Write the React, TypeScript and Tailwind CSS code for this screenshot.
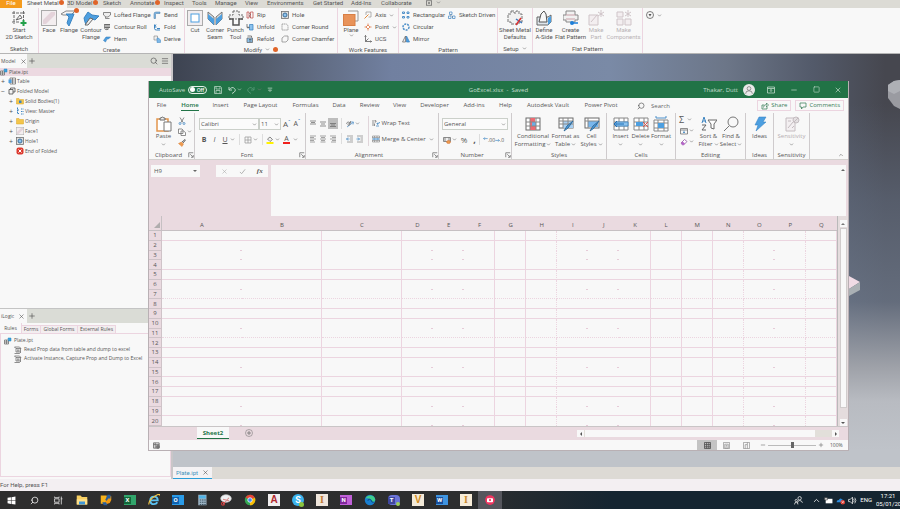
import type { ReactNode } from "react";
import clsx from "clsx";
import {
  ChevronDown,
  ChevronUp,
  Menu,
  Minus,
  Plus,
  Search,
  Square,
  X,
} from "lucide-react";

interface ArtProps {
  children: ReactNode;
  className?: string;
}

/* 16x16 drawing surface shared by all small icons */
function Art({ children, className = "size-4" }: ArtProps) {
  return (
    <svg
      viewBox="0 0 16 16"
      fill="none"
      stroke="#6b6b6b"
      strokeWidth="1"
      aria-hidden="true"
      className={clsx("shrink-0", className)}
    >
      {children}
    </svg>
  );
}

const S = "size-2";

const art = {
  sketch: (
    <>
      <path d="M3 1v13M1 3h13M12.5 1v9M1 12h8" strokeDasharray="3 1" />
      <path d="M5 10 9 5l2 3z" />
      <path d="M12.500 10v6M9.500 13h6" stroke="#22a04a" strokeWidth="2" />
    </>
  ),
  face: (
    <>
      <rect x="0.5" y="0.5" width="15" height="15" fill="#f3eef0" stroke="#aaa" />
      <path d="M2 10 10 2h4v3L5 14H2z" fill="#e4d3da" stroke="none" />
    </>
  ),
  flange: (
    <>
      <path d="M0 4 5 1h9l-4 4H2z" fill="#f5f5f5" stroke="#888" />
      <path d="M5 4h8l-2 5-3 7-2-3 2-6z" fill="#4d9fe0" stroke="#3c84c0" />
    </>
  ),
  contour: (
    <>
      <path d="M1 8 5 2l4 3 7 1-4 4-5-2-4 7-1-3z" fill="#4d9fe0" stroke="#3c84c0" />
      <path d="M2 15 7 8l3 1-5 6z" fill="#eee" />
    </>
  ),
  lofted: (
    <>
      <path d="M1 3h14v5l-5 4H6L1 8z" fill="#eee" stroke="#666" strokeWidth="1.5" />
      <path d="M5 12v3h8" strokeWidth="1.500" />
    </>
  ),
  roll: (
    <>
      <path d="M3 3h11M3 6h11M3 9h11M5 12h6" strokeWidth="2" />
      <path d="M3 2v9c0 3 8 3 8 0" stroke="#444" />
    </>
  ),
  hem: <path d="M1 11 6 4h9l-4 4H8l-3 6z" fill="#4d9fe0" stroke="#2d74b4" />,
  bend: (
    <>
      <path d="M2 15V6q0-4 4-4h8v3H7Q5 5 5 7v8z" fill="#7db8e8" stroke="#45779f" />
    </>
  ),
  fold: <path d="M3 3v8q0 3 4 3h7M7 8H3l3-5M8 11h6" stroke="#3c84c0" strokeWidth="2" />,
  derive: (
    <>
      <path d="M2 2h7v8H2z" fill="#eee" />
      <path d="M8 6h3l4 4v5H8z" fill="#7db8e8" stroke="#3c84c0" />
    </>
  ),
  cut: (
    <>
      <rect x="0.5" y="0.5" width="15" height="15" fill="#f1edef" stroke="#aaa" />
      <rect x="4" y="4" width="8" height="8" fill="#fff" stroke="#4d9fe0" />
    </>
  ),
  seam: (
    <>
      <path d="M1 2v7l6 6V7zM15 2v7l-6 6V7z" fill="#ddd" stroke="#777" />
      <path d="m1 9 6 6V9L1 4zM15 9l-6 6V9l6-5z" fill="#4d9fe0" stroke="none" />
    </>
  ),
  punch: (
    <>
      <path d="M5 1h6v4h4v4H1V5h4z" fill="#eee" strokeDasharray="2 1" />
      <path d="M1 9h4v6h6V9h4" stroke="#555" strokeWidth="1.500" />
    </>
  ),
  rip: (
    <>
      <path d="M2 2h4v12H2zM9 2h5v12H9z" stroke="#c0504d" strokeWidth="1.5" />
      <path d="M6 4l3 3-3 3 3 3" stroke="#555" />
    </>
  ),
  unfold: (
    <>
      <path d="M7 3h7v11H7z" fill="#8cc3ee" stroke="#3c84c0" strokeWidth="1.500" />
      <path d="M2 2v7h4M4 7l2 2-2 2" stroke="#555" strokeWidth="1.5" />
    </>
  ),
  refold: (
    <>
      <path d="M2 6h11v9H2z" fill="#8cc3ee" stroke="#666" strokeWidth="1.500" />
      <path d="M3 2h8v3M6 9h5M6 12h5" stroke="#555" strokeWidth="1.500" />
    </>
  ),
  hole: (
    <>
      <rect x="1" y="1" width="14" height="14" fill="#ddd" strokeWidth="1.5" />
      <circle cx="8" cy="8" r="4" fill="#8cc3ee" stroke="#3c6f9c" strokeWidth="2" />
    </>
  ),
  round: <path d="M2 2h7q5 0 5 6v6H2z" stroke="#8a8a8a" strokeWidth="1.500" strokeDasharray="3 1" />,
  chamfer: <path d="M2 14V6l5-4h7v8l-4 4z" stroke="#8a8a8a" strokeWidth="1.500" />,
  plane: (
    <>
      <path d="M5 1h10v10h-4" stroke="#999" />
      <rect x="0.5" y="4.5" width="11.5" height="11" fill="#e8935a" stroke="#d87f45" />
    </>
  ),
  axis: (
    <>
      <path d="M4 2h10v10H9M4 2v6" stroke="#999" strokeWidth="1.500" />
      <path d="m1 15 8-8" stroke="#e08a3c" strokeWidth="2" />
    </>
  ),
  point: (
    <>
      <path d="M8 1v14M1 8h14" stroke="#e0713c" strokeWidth="1.5" />
      <path d="m8 4 4 4-4 4-4-4z" fill="#fff" stroke="#e0713c" strokeWidth="1.500" />
    </>
  ),
  ucs: <path d="M3 1v12h12M3 13 9 7M1 3l2-2 2 2M13 11l2 2-2 2" stroke="#555" strokeWidth="1.500" />,
  rect: (
    <g stroke="#4d8fc8" strokeWidth="2">
      <path d="M1 2h4v3H1zM10 2h4v3h-4zM1 11h4v3H1zM10 11h4v3h-4z" />
    </g>
  ),
  circular: <circle cx="8" cy="8" r="6" stroke="#4d8fc8" strokeWidth="3" strokeDasharray="4 2" />,
  mirror: (
    <>
      <path d="M7 2v12H1z" fill="#eee" strokeWidth="1.500" />
      <path d="M9 2v12h6z" fill="#4d9fe0" stroke="#3c84c0" strokeWidth="1.5" />
    </>
  ),
  driven: (
    <>
      <path d="M1 10h5v5H1zM9 10h5v5H9zM3 2h5v5H3z" stroke="#4d8fc8" strokeWidth="1.500" />
      <path d="M8 12h2M6 7v3" stroke="#555" />
    </>
  ),
  defaults: (
    <>
      <path d="M4 1h3v2h2V1h3v3h3v8h-3v2H4v-2H1V4h3z" fill="#f1f1f1" stroke="#777" strokeDasharray="3 1" />
      <path d="m9 9 6 4" stroke="#3a76b8" strokeWidth="1.5" />
      <path d="m14 8-5 7" stroke="#d33" strokeWidth="1.5" />
    </>
  ),
  aside: (
    <>
      <path d="M1 7h11l3-2v7l-3 3H1z" fill="#dfe6ec" stroke="#666" />
      <path d="M12 8v7l3-3V6z" fill="#4d9fe0" stroke="none" />
      <path d="m3 12 2-8 3-3 2 3 1 8z" fill="#f8f8f8" stroke="#555" />
    </>
  ),
  flat: (
    <>
      <path d="M3 1h9v4h3v5h-3v2H3v-2H0V5h3z" fill="#f1f1f1" stroke="#888" />
      <path d="M3 5h9M3 9h9" stroke="#c9a0a8" />
      <circle cx="9" cy="13" r="2" fill="#1d7fd8" stroke="none" />
      <path d="M10 13h5" stroke="#1d7fd8" strokeWidth="1.5" />
    </>
  ),
  makePart: (
    <g stroke="#cfc4c8">
      <path d="M1 5h9v10H1zM3 12l6-7" fill="#f3eef0" />
      <path d="M13 0v7M10 2l6 4M16 2l-6 4" />
    </g>
  ),
  makeComps: (
    <g stroke="#cfc4c8">
      <path d="M1 2h6v5H1zM1 9h6v6H1zM9 9h6v6H9z" fill="#f3eef0" />
      <path d="M12 0v7M9 2l6 4M15 2l-6 4" />
    </g>
  ),
  part: (
    <>
      <path d="M1 6h8v8H1zM5 6v8M1 10h8" fill="#eee" strokeWidth="1.5" />
      <path d="M8 2h6v6H9z" fill="#38a3e0" stroke="#2684bd" />
    </>
  ),
  table: (
    <>
      <path d="M4 2h11v12H4zM4 6h11M4 10h11M9 2v12" fill="#fff" strokeWidth="1.5" />
      <path d="M1 5h6v7H1z" fill="#4d9fe0" stroke="none" />
    </>
  ),
  folded: (
    <>
      <path d="M2 5h8v9H2zM5 5V2h9v8h-4" fill="#f3f3f3" stroke="#444" strokeWidth="1.500" />
    </>
  ),
  folder: <path d="M1 3h5l1 2h8v9H1z" fill="#f3c54b" stroke="#d9a425" />,
  solids: (
    <>
      <path d="M1 3h5l1 2h8v9H1z" fill="#f3c54b" stroke="#d9a425" />
      <rect x="6" y="7" width="5" height="5" fill="#3c84c0" stroke="none" />
    </>
  ),
  views: <path d="M3 1v12h4M3 6h4M10 4h5M10 9h5M10 14h5" stroke="#3c84c0" strokeWidth="2" strokeDasharray="3 1" />,
  end: (
    <>
      <rect x="1" y="1" width="14" height="14" rx="4" fill="#dd3b30" stroke="none" />
      <path d="m5 5 6 6M11 5l-6 6" stroke="#fff" strokeWidth="2" />
    </>
  ),
  rule: <path d="M1 2h10l3 3H4zM4 5v7h9V5M1 15h10l3-3M6 8h5M6 10h5" strokeWidth="1.500" />,
  paste: (
    <>
      <rect x="1" y="3" width="11" height="12" fill="#fff" stroke="#e2954c" strokeWidth="1.500" />
      <path d="M4 4V2h1q1-2 3 0h1v2z" fill="#eee" />
      <path d="M8 6h7v9H8z" fill="#fff" stroke="#777" />
    </>
  ),
  scissors: (
    <>
      <path d="m4 1 6 10M12 1 6 11" stroke="#666" strokeWidth="1.500" />
      <circle cx="4" cy="13" r="2" stroke="#3c84c0" strokeWidth="1.5" />
      <circle cx="12" cy="13" r="2" stroke="#3c84c0" strokeWidth="1.5" />
    </>
  ),
  copy: <path d="M1 2h7l2 2v7H1zM6 6h5l4 3v6H6z" fill="#fff" strokeWidth="1.500" />,
  brush: (
    <>
      <path d="m1 9 6-3 4 4-3 5z" fill="#ee9b4f" stroke="#d87f35" />
      <path d="m8 6 6-5 1 1-5 6" stroke="#666" strokeWidth="2" />
    </>
  ),
  borders: <path d="M2 2h12v12H2zM8 2v12M2 8h12" stroke="#999" strokeWidth="1.5" />,
  bucket: (
    <>
      <path d="m3 6 5-4 5 5-5 4z" fill="#eee" stroke="#666" strokeWidth="1.500" />
      <path d="M1 14h14" stroke="#fff200" strokeWidth="4" />
    </>
  ),
  alignTop: <path d="M2 2h12M4 5h8M2 8h12" strokeWidth="1.5" />,
  alignMid: <path d="M2 4h12M4 8h8M2 12h12" strokeWidth="1.500" />,
  alignBottom: <path d="M2 7h12M4 10h8M2 13h12" strokeWidth="1.500" />,
  alignLeft: <path d="M2 2h12M2 5h8M2 8h12M2 11h8M2 14h10" stroke="#888" strokeWidth="1.500" />,
  alignCenter: <path d="M2 2h12M4 5h8M2 8h12M4 11h8M3 14h10" stroke="#888" strokeWidth="1.500" />,
  alignRight: <path d="M2 2h12M6 5h8M2 8h12M6 11h8M4 14h10" stroke="#888" strokeWidth="1.5" />,
  orient: (
    <>
      <path d="m2 14 12-9M10 4l5 0-1 5" stroke="#4d8fc8" strokeWidth="1.5" />
      <path d="M1 8q1-5 5-4t1 6q-4 2-3-1t5-3V2" strokeWidth="1.500" />
    </>
  ),
  indent: (
    <>
      <path d="M2 2h12M8 6h6M8 10h6M2 14h12" stroke="#888" strokeWidth="1.5" />
      <path d="M7 8H1M4 5 1 8l3 3" stroke="#3c84c0" strokeWidth="1.500" />
    </>
  ),
  outdent: (
    <>
      <path d="M2 2h12M9 6h5M9 10h5M2 14h12" stroke="#888" strokeWidth="1.5" />
      <path d="M1 8h6M4 5l3 3-3 3" stroke="#3c84c0" strokeWidth="1.500" />
    </>
  ),
  wrap: (
    <>
      <path d="M2 2v12M5 3q4-1 3 3H5M5 9v5" strokeWidth="1.500" />
      <path d="M10 9h3q2 0 2-3M12 7l-2 2 2 3M8 14h6" stroke="#3c84c0" strokeWidth="1.500" />
    </>
  ),
  merge: (
    <>
      <path d="M1 2h14v12H1zM1 5h14M1 11h14M5 2v3M10 2v3M5 11v3M10 11v3" strokeWidth="1" />
      <path d="M1 6h14v4H1z" fill="#bfdcf4" stroke="none" />
      <path d="M3 8h10M5 6 3 8l2 2M11 6l2 2-2 2" stroke="#2d74b4" />
    </>
  ),
  currency: (
    <>
      <path d="M1 3h14v8H1zM4 3v8M12 3v8" fill="#eee" strokeWidth="1.500" />
      <ellipse cx="11" cy="12" rx="4" ry="3" fill="#ee9b4f" stroke="#cf6d30" />
    </>
  ),
  conditional: (
    <>
      <rect x="1" y="2" width="14" height="12" fill="#fff" />
      <path d="M5 2h5v4H5zM5 6h2v4H5z M5 10h6v4H5z" fill="#ee6a72" stroke="none" />
      <path d="M7 6h4v4H7z" fill="#6aaee8" stroke="none" />
      <path d="M1 6h14M1 10h14M5 2v12M11 2v12" stroke="#888" />
    </>
  ),
  formatTable: (
    <>
      <rect x="1" y="2" width="14" height="10" fill="#fff" />
      <path d="M5 5h10v7H5z" fill="#a9d0f2" stroke="none" />
      <path d="M1 5h14M1 8h14M5 2v10M10 2v10" stroke="#888" />
      <path d="m6 15 3-5 6-5-5 7z" fill="#4d9fe0" stroke="#356d9c" />
    </>
  ),
  cellStyles: (
    <>
      <rect x="1" y="2" width="14" height="10" fill="#fff" />
      <path d="M4 5h10v6H4z" fill="#78b6ec" stroke="none" />
      <path d="M1 5h14M4 2v10" stroke="#888" />
      <path d="m6 15 3-5 6-5-5 7z" fill="#4d9fe0" stroke="#356d9c" />
    </>
  ),
  insert: (
    <>
      <path d="M1 2h14v12H1zM1 6h14M1 10h14M6 2v12M11 2v12" fill="#fff" stroke="#888" />
      <path d="M3 6h12v4H3z" fill="#8cc3ee" stroke="#4d8fc8" />
      <path d="M11 8H1M4 5 1 8l3 3" stroke="#1d6fb8" />
    </>
  ),
  remove: (
    <>
      <path d="M1 2h14v12H1zM1 6h14M1 10h14M6 2v12M11 2v12" fill="#fff" stroke="#888" />
      <path d="M3 6h7v4H3z" fill="#4d9fe0" stroke="none" />
      <path d="m10 6 5 5M15 6l-5 5" stroke="#e0524c" />
    </>
  ),
  format: (
    <>
      <path d="M3 0v2h10V0" stroke="#4d8fc8" />
      <path d="M1 4h14v11H1zM1 7h14M1 12h14M5 4v11M11 4v11" fill="#fff" stroke="#888" />
      <path d="M5 7h6v5H5z" fill="#4d9fe0" stroke="none" />
    </>
  ),
  fill: (
    <>
      <path d="M1 3h14v11H1zM1 6h14" strokeWidth="1.500" />
      <path d="M8 7v5M6 10l2 2 2-2" stroke="#3c84c0" strokeWidth="1.5" />
    </>
  ),
  eraser: (
    <>
      <path d="m2 10 7-7 5 4-7 7H5z" fill="#fff" stroke="#8a4a9c" strokeWidth="1.500" />
      <path d="m2 10 3-3 5 4-3 3H5z" fill="#b565c8" stroke="none" />
    </>
  ),
  sort: (
    <>
      <path d="m1 7 2-6 2 6M2 5h3" stroke="#3c84c0" />
      <path d="M1 9h4l-4 5h4" stroke="#666" />
      <path d="M7 4h9l-3 4v5l-3-1V8z" fill="#fff" />
    </>
  ),
  find: (
    <>
      <circle cx="10" cy="6" r="5" stroke="#777" />
      <path d="m6 10-5 5" stroke="#777" />
    </>
  ),
  ideas: <path d="M7 1h7l-3 5h3L4 15l2-6H3z" fill="#4d9fe0" stroke="#2f7cc0" strokeWidth="0.500" />,
  sensitivity: (
    <g stroke="#c4bcc0">
      <path d="M2 2h9v13H2z" fill="#f3eff1" />
      <path d="m4 12 5-6M4 5h3M8 12l2-2" />
      <circle cx="12" cy="4" r="3" fill="#e4e0e2" />
      <path d="m10 6 4-4" />
    </g>
  ),
};

type ArtName = keyof typeof art;

function Caret({ className }: { className?: string }) {
  return <ChevronDown className={clsx("size-[5px] shrink-0 text-[#777]", className)} strokeWidth={3} aria-hidden="true" />;
}

/* ---------- Modelling application ---------- */

const CAD_TABS: { label: string; width: string; dot?: boolean }[] = [
  { label: "3D Model", width: "w-[36px]", dot: true },
  { label: "Sketch", width: "w-[27px]" },
  { label: "Annotate", width: "w-[34px]", dot: true },
  { label: "Inspect", width: "w-[28px]" },
  { label: "Tools", width: "w-[23px]" },
  { label: "Manage", width: "w-[30px]" },
  { label: "View", width: "w-[22px]" },
  { label: "Environments", width: "w-[46px]" },
  { label: "Get Started", width: "w-[38px]" },
  { label: "Add-Ins", width: "w-[30px]" },
  { label: "Collaborate", width: "w-[45px]" },
];

function OrangeDot() {
  return <span className="block size-[5px] shrink-0 rounded-full bg-[#e0652a]" />;
}

interface BigProps {
  icon: ArtName;
  lines: string[];
  width: string;
  muted?: boolean;
  dot?: boolean;
  caret?: boolean;
}

function CadBig({ icon, lines, width, muted, dot, caret }: BigProps) {
  return (
    <button
      className={clsx(
        "relative flex shrink-0 flex-col items-center pt-[2px] leading-[7px] whitespace-nowrap",
        width,
        muted && "text-[#b9b3b6]",
      )}
    >
      <Art>{art[icon]}</Art>
      {dot && (
        <span className="absolute top-0 right-0">
          <OrangeDot />
        </span>
      )}
      {lines.map((line) => (
        <span key={line}>{line}</span>
      ))}
      {caret && <Caret />}
    </button>
  );
}

interface SmallItem {
  icon: ArtName;
  label: string;
  caret?: boolean;
}

function CadColumn({ items, width }: { items: SmallItem[]; width: string }) {
  return (
    <div className={clsx("flex shrink-0 flex-col pt-px", width)}>
      {items.map((item) => (
        <button key={item.label} className="flex h-3 items-center gap-[3px] whitespace-nowrap">
          <Art className={S}>{art[item.icon]}</Art>
          <span>{item.label}</span>
          {item.caret && <Caret />}
        </button>
      ))}
    </div>
  );
}

function CadGroup({ title, width, children }: { title: ReactNode; width: string; children: ReactNode }) {
  return (
    <section className={clsx("flex shrink-0 flex-col border-r border-[#ecd5e0]", width)}>
      <div className="flex flex-1">{children}</div>
      <div className="flex h-[9px] items-center justify-center gap-[3px] leading-[7px]">{title}</div>
    </section>
  );
}

function CadRibbon() {
  return (
    <div className="flex h-[46px] shrink-0 overflow-hidden border-b border-[#b5b5b5] bg-[#f8f8f8]">
      <CadGroup title="Sketch" width="w-[39px]">
        <CadBig icon="sketch" lines={["Start", "2D Sketch"]} width="w-[38px]" />
      </CadGroup>
      <CadGroup title="Create" width="w-[146px]">
        <CadBig icon="face" lines={["Face"]} width="w-[20px]" />
        <CadBig icon="flange" lines={["Flange"]} width="w-[20px]" dot />
        <CadBig icon="contour" lines={["Contour", "Flange"]} width="w-[24px]" />
        <CadColumn
          width="w-[50px]"
          items={[
            { icon: "lofted", label: "Lofted Flange" },
            { icon: "roll", label: "Contour Roll" },
            { icon: "hem", label: "Hem" },
          ]}
        />
        <CadColumn
          width="w-[28px]"
          items={[
            { icon: "bend", label: "Bend" },
            { icon: "fold", label: "Fold" },
            { icon: "derive", label: "Derive" },
          ]}
        />
      </CadGroup>
      <CadGroup
        width="w-[153px]"
        title={
          <>
            Modify <Caret /> <OrangeDot />
          </>
        }
      >
        <CadBig icon="cut" lines={["Cut"]} width="w-[20px]" />
        <CadBig icon="seam" lines={["Corner", "Seam"]} width="w-[20px]" />
        <CadBig icon="punch" lines={["Punch", "Tool"]} width="w-[21px]" />
        <CadColumn
          width="w-[35px]"
          items={[
            { icon: "rip", label: "Rip" },
            { icon: "unfold", label: "Unfold" },
            { icon: "refold", label: "Refold" },
          ]}
        />
        <CadColumn
          width="w-[54px]"
          items={[
            { icon: "hole", label: "Hole" },
            { icon: "round", label: "Corner Round" },
            { icon: "chamfer", label: "Corner Chamfer" },
          ]}
        />
      </CadGroup>
      <CadGroup title="Work Features" width="w-[61px]">
        <CadBig icon="plane" lines={["Plane"]} width="w-[26px]" caret />
        <CadColumn
          width="w-[34px]"
          items={[
            { icon: "axis", label: "Axis", caret: true },
            { icon: "point", label: "Point", caret: true },
            { icon: "ucs", label: "UCS" },
          ]}
        />
      </CadGroup>
      <CadGroup title="Pattern" width="w-[99px]">
        <div className="flex pl-[3px]">
          <CadColumn
            width="w-[46px]"
            items={[
              { icon: "rect", label: "Rectangular" },
              { icon: "circular", label: "Circular" },
              { icon: "mirror", label: "Mirror" },
            ]}
          />
          <CadColumn width="w-[48px]" items={[{ icon: "driven", label: "Sketch Driven" }]} />
        </div>
      </CadGroup>
      <CadGroup
        width="w-[35px]"
        title={
          <>
            Setup <Caret />
          </>
        }
      >
        <CadBig icon="defaults" lines={["Sheet Metal", "Defaults"]} width="w-[34px]" />
      </CadGroup>
      <CadGroup title="Flat Pattern" width="w-[110px]">
        <CadBig icon="aside" lines={["Define", "A-Side"]} width="w-[22px]" />
        <CadBig icon="flat" lines={["Create", "Flat Pattern"]} width="w-[31px]" />
        <CadBig icon="makePart" lines={["Make", "Part"]} width="w-[20px]" muted />
        <CadBig icon="makeComps" lines={["Make", "Components"]} width="w-[35px]" muted />
      </CadGroup>
      <button aria-label="More panels" className="flex h-[14px] items-center gap-[3px] pl-[3px]">
        <Art className={S}>
          <circle cx="8" cy="8" r="7" stroke="#555" strokeWidth="1.500" />
          <path d="M5 6h6l-3 5z" fill="#555" stroke="none" />
        </Art>
        <Caret />
      </button>
    </div>
  );
}

const TREE: { icon: ArtName; label: string; depth: string; sign?: "+" | "−" }[] = [
  { icon: "table", label: "Table", depth: "pl-[1px]", sign: "+" },
  { icon: "folded", label: "Folded Model", depth: "pl-[1px]", sign: "−" },
  { icon: "solids", label: "Solid Bodies(1)", depth: "pl-[9px]", sign: "+" },
  { icon: "views", label: "View: Master", depth: "pl-[9px]", sign: "+" },
  { icon: "folder", label: "Origin", depth: "pl-[9px]", sign: "+" },
  { icon: "face", label: "Face1", depth: "pl-[9px]", sign: "+" },
  { icon: "hole", label: "Hole1", depth: "pl-[9px]", sign: "+" },
  { icon: "end", label: "End of Folded", depth: "pl-[9px]" },
];

const RULES = [
  "Read Prop data from table and dump to excel",
  "Activate Instance, Capture Prop and Dump to Excel",
];

function PanelTab({ label, children }: { label: string; children?: ReactNode }) {
  return (
    <div className="flex h-[14px] items-center bg-[#dadcd6]">
      <button className="flex h-full w-[27px] items-center gap-1 bg-[#f8f8f8] pl-px">
        {label}
        <X className="size-[7px]" aria-hidden="true" />
      </button>
      <button aria-label={`Add to ${label}`} className="pl-px">
        <Plus className="size-2" />
      </button>
      <div className="flex flex-1 items-center justify-end gap-[3px] pr-[2px]">{children}</div>
    </div>
  );
}

function SidePanels() {
  return (
    <aside className="flex w-[173px] shrink-0 flex-col border-r-2 border-[#c9c6c8] bg-[#f8f8f8] font-['Open_Sans',sans-serif] text-[5px] leading-[7px]">
      <div className="flex flex-3 flex-col">
        <PanelTab label="Model">
          <Search className="size-2" />
          <Menu className="size-2" />
        </PanelTab>
        <div className="flex h-2 items-center gap-px bg-[#ecd9e1]">
          <Art className={S}>{art.part}</Art>
          Plate.ipt
        </div>
        <ul>
          {TREE.map((node) => (
            <li key={node.label} className={clsx("flex h-[10px] items-center gap-px", node.depth)}>
              <span className="w-[6px] text-[7px]">{node.sign}</span>
              <Art className={S}>{art[node.icon]}</Art>
              <span>{node.label}</span>
            </li>
          ))}
        </ul>
      </div>
      <div className="flex flex-2 flex-col border-t border-[#c4c4c4]">
        <PanelTab label="iLogic" />
        <div className="flex h-[10px] items-end">
          <button className="h-full w-[22px] border-r border-[#ecd5e0]">Rules</button>
          <button className="h-2 w-[19px] border-t border-r border-[#ecd5e0] bg-[#f3eef0]">Forms</button>
          <button className="h-2 w-[37px] border-t border-r border-[#ecd5e0] bg-[#f3eef0] whitespace-nowrap">Global Forms</button>
          <button className="h-2 w-[38px] border-t border-r border-[#ecd5e0] bg-[#f3eef0] whitespace-nowrap">External Rules</button>
        </div>
        <div className="mb-[2px] flex-1 border border-[#ecd5e0] pt-[2px]">
          <div className="flex h-[9px] items-center gap-[2px] pl-[3px]">
            <Art className={S}>{art.part}</Art>
            Plate.ipt
          </div>
          {RULES.map((rule) => (
            <div key={rule} className="flex h-[9px] items-center gap-[2px] pl-[13px] whitespace-nowrap">
              <Art className={S}>{art.rule}</Art>
              {rule}
            </div>
          ))}
        </div>
      </div>
    </aside>
  );
}

function Viewport() {
  return (
    <main className="flex min-w-0 flex-1 flex-col">
      <div className="relative flex-1 overflow-hidden bg-[linear-gradient(to_bottom,transparent_0%,transparent_12%,#66728680_35%,#7683979f_60%,#9fa2a9_76%,#b8bbc1_84%,#bfc3c9_96%),linear-gradient(to_right,#3d4351_0%,#535b6b_12%,#7180a0_30%,#7a8aa6_60%,#6c7688_76%,#535a6a_88%,#46474f_98%)]">
        <svg className="absolute top-0 right-0 h-[260px] w-[60px]" viewBox="0 0 60 260" aria-hidden="true">
          <path d="m48 31 6-4 6-1v29l-6-3-6-8z" fill="#9a9ba1" />
          <path d="m48 31 6-4 6-1v11l-6 3-6-3z" fill="#aeb0b5" />
          <path d="m9 222 11 6-11 7z" fill="#f0dbe5" />
          <path d="m20 228v8l-11 6v-7z" fill="#aab0b4" />
        </svg>
      </div>
      <div className="h-3 bg-[#dddad5]">
        <button className="flex h-full w-[39px] items-center justify-center gap-1 border-b border-[#2b9ed8] bg-[#f4f2f4] text-[#4193bd]">
          Plate.ipt
          <X className="size-[7px] text-[#555]" aria-hidden="true" />
        </button>
      </div>
    </main>
  );
}

/* ---------- Spreadsheet window ---------- */

const XL_TABS: { label: string; width: string }[] = [
  { label: "File", width: "w-[25px]" },
  { label: "Home", width: "w-[32px]" },
  { label: "Insert", width: "w-[29px]" },
  { label: "Page Layout", width: "w-[51px]" },
  { label: "Formulas", width: "w-[39px]" },
  { label: "Data", width: "w-[28px]" },
  { label: "Review", width: "w-[33px]" },
  { label: "View", width: "w-[27px]" },
  { label: "Developer", width: "w-[43px]" },
  { label: "Add-ins", width: "w-[36px]" },
  { label: "Help", width: "w-[27px]" },
  { label: "Autodesk Vault", width: "w-[58px]" },
  { label: "Power Pivot", width: "w-[48px]" },
];

function XlBig({ icon, lines, width, muted, arrow = "none" }: {
  icon: ArtName;
  lines: string[];
  width: string;
  muted?: boolean;
  arrow?: "none" | "inline" | "below";
}) {
  return (
    <button
      className={clsx(
        "flex shrink-0 flex-col items-center pt-[3px] whitespace-nowrap",
        width,
        muted && "text-[#b5aeb1]",
      )}
    >
      <Art>{art[icon]}</Art>
      {lines.map((line, i) => (
        <span key={line} className="flex items-center gap-px">
          {line}
          {arrow === "inline" && i === lines.length - 1 && <Caret />}
        </span>
      ))}
      {arrow === "below" && <Caret className="mt-[2px]" />}
    </button>
  );
}

function XlGroup({ title, width, launcher, children }: {
  title: string;
  width: string;
  launcher?: boolean;
  children: ReactNode;
}) {
  return (
    <section className={clsx("flex shrink-0 flex-col border-r border-[#cfcbcd]", width)}>
      <div className="flex flex-1 justify-center">{children}</div>
      <div className="flex h-2 items-center">
        <span className="flex-1 text-center">{title}</span>
        {launcher && (
          <Art className="size-[6px]">
            <path d="M2 14V2h12M6 6l7 7M14 8v6H8" strokeWidth="2" />
          </Art>
        )}
      </div>
    </section>
  );
}

function IconButton({ icon, label, active, caret }: { icon: ArtName; label: string; active?: boolean; caret?: boolean }) {
  return (
    <button
      aria-label={label}
      className={clsx("flex h-[11px] shrink-0 items-center gap-px px-px", active && "bg-[#bdbdbd]")}
    >
      <Art className={S}>{art[icon]}</Art>
      {caret && <Caret />}
    </button>
  );
}

function Picker({ label, value, width }: { label: string; value: string; width: string }) {
  return (
    <span className={clsx("grid shrink-0 items-center border border-[#cbd0ca] bg-[#fbfbfb]", width)}>
      <select
        aria-label={label}
        className="col-start-1 row-start-1 h-[10px] appearance-none bg-transparent pl-px leading-[8px] outline-none"
      >
        <option>{value}</option>
      </select>
      <Caret className="pointer-events-none col-start-1 row-start-1 mr-px justify-self-end" />
    </span>
  );
}

function XlRibbon() {
  return (
    <div className="flex h-[46px] bg-[#f8f8f8] leading-[8px]">
      <XlGroup title="Clipboard" width="w-[46px]" launcher>
        <XlBig icon="paste" lines={["Paste"]} width="w-[26px]" arrow="below" />
        <div className="flex w-4 flex-col pt-[2px]">
          <IconButton icon="scissors" label="Cut" />
          <IconButton icon="copy" label="Copy" caret />
          <IconButton icon="brush" label="Format Painter" />
        </div>
      </XlGroup>
      <XlGroup title="Font" width="w-[111px]" launcher>
        <div className="flex flex-1 flex-col gap-[4px] pt-[5px] pl-[4px]">
          <div className="flex items-center">
            <Picker label="Font" value="Calibri" width="w-[60px]" />
            <Picker label="Font size" value="11" width="w-[22px]" />
            <button className="pl-[2px] text-[8px]">A<sup className="text-[#3c84c0]">ˆ</sup></button>
            <button className="pl-[3px] text-[7px]">A<sup className="text-[#3c84c0]">ˇ</sup></button>
          </div>
          <div className="flex h-[11px] items-center">
            <button className="w-[10px] text-[7px] font-bold">B</button>
            <button className="w-[11px] text-[7px] italic">I</button>
            <button className="w-[10px] text-[7px] underline">U</button>
            <Caret />
            <span className="ml-1 h-[11px] w-px bg-[#ddd]" />
            <span className="flex w-[22px] justify-center">
              <IconButton icon="borders" label="Borders" caret />
            </span>
            <span className="h-[11px] w-px bg-[#ddd]" />
            <span className="flex w-[20px] justify-center">
              <IconButton icon="bucket" label="Fill colour" caret />
            </span>
            <button aria-label="Font colour" className="flex items-center gap-[3px]">
              <span className="w-[7px] border-b-2 border-[#f0201c] text-center text-[7px] leading-[7px]">A</span>
              <Caret />
            </button>
          </div>
        </div>
      </XlGroup>
      <XlGroup title="Alignment" width="w-[133px]" launcher>
        <div className="flex w-[60px] flex-col gap-[4px] pt-[5px]">
          <div className="flex items-center">
            <IconButton icon="alignTop" label="Top align" />
            <IconButton icon="alignMid" label="Middle align" />
            <IconButton icon="alignBottom" label="Bottom align" active />
            <span className="mx-[3px] h-[11px] w-px bg-[#ddd]" />
            <IconButton icon="orient" label="Orientation" caret />
          </div>
          <div className="flex items-center">
            <IconButton icon="alignLeft" label="Align left" />
            <IconButton icon="alignCenter" label="Centre" />
            <IconButton icon="alignRight" label="Align right" />
            <span className="mx-[3px] h-[11px] w-px bg-[#ddd]" />
            <IconButton icon="indent" label="Decrease indent" />
            <IconButton icon="outdent" label="Increase indent" />
          </div>
        </div>
        <div className="mt-[3px] mb-[5px] flex w-[69px] flex-col justify-between border-l border-[#e0d5da] pl-[3px]">
          <button className="flex h-[14px] items-center gap-[2px]">
            <Art className={S}>{art.wrap}</Art>
            Wrap Text
          </button>
          <button className="flex h-[14px] items-center gap-[2px] whitespace-nowrap">
            <Art className={S}>{art.merge}</Art>
            Merge &amp; Center
            <Caret className="ml-px" />
          </button>
        </div>
      </XlGroup>
      <XlGroup title="Number" width="w-[73px]" launcher>
        <div className="flex w-[66px] flex-col gap-[4px] pt-[5px]">
          <Picker label="Number format" value="General" width="w-[66px]" />
          <div className="flex h-[11px] items-center">
            <IconButton icon="currency" label="Accounting format" caret />
            <button className="w-[12px] text-[8px]">%</button>
            <button className="w-[9px] text-[9px] font-bold">,</button>
            <span className="mr-[3px] h-[11px] w-px bg-[#ddd]" />
            <button aria-label="Increase decimal" className="flex w-3 items-center text-[5px]">
              <Art className="size-[5px]"><path d="M15 5H2M6 1 2 5l4 4" stroke="#3c84c0" strokeWidth="2" /></Art>
              .00
            </button>
            <button aria-label="Decrease decimal" className="flex w-3 items-center text-[5px]">
              <Art className="size-[5px]"><path d="M1 11h13M10 7l4 4-4 4" stroke="#3c84c0" strokeWidth="2" /></Art>
              .0
            </button>
          </div>
        </div>
      </XlGroup>
      <XlGroup title="Styles" width="w-[95px]">
        <XlBig icon="conditional" lines={["Conditional", "Formatting"]} width="w-[35px]" arrow="inline" />
        <XlBig icon="formatTable" lines={["Format as", "Table"]} width="w-[30px]" arrow="inline" />
        <XlBig icon="cellStyles" lines={["Cell", "Styles"]} width="w-[22px]" arrow="inline" />
      </XlGroup>
      <XlGroup title="Cells" width="w-[69px]">
        <XlBig icon="insert" lines={["Insert"]} width="w-[20px]" arrow="below" />
        <XlBig icon="remove" lines={["Delete"]} width="w-[20px]" arrow="below" />
        <XlBig icon="format" lines={["Format"]} width="w-[21px]" arrow="below" />
      </XlGroup>
      <XlGroup title="Editing" width="w-[70px]">
        <div className="flex w-[18px] flex-col items-start pt-px">
          <button aria-label="AutoSum" className="flex h-[11px] items-center gap-[3px] text-[9px]">
            Σ <Caret />
          </button>
          <IconButton icon="fill" label="Fill" caret />
          <IconButton icon="eraser" label="Clear" caret />
        </div>
        <XlBig icon="sort" lines={["Sort &", "Filter"]} width="w-[23px]" arrow="inline" />
        <XlBig icon="find" lines={["Find &", "Select"]} width="w-[22px]" arrow="inline" />
      </XlGroup>
      <XlGroup title="Ideas" width="w-[28px]">
        <XlBig icon="ideas" lines={["Ideas"]} width="w-[26px]" />
      </XlGroup>
      <XlGroup title="Sensitivity" width="w-[36px]">
        <XlBig icon="sensitivity" lines={["Sensitivity"]} width="w-[34px]" muted arrow="below" />
      </XlGroup>
      <button aria-label="Collapse ribbon" className="flex flex-1 items-end justify-end pr-1 pb-px">
        <ChevronUp className="size-[6px]" />
      </button>
    </div>
  );
}

const COLUMNS = "ABCDEFGHIJKLMNOPQ".split("");
const ROWS = Array.from({ length: 20 }, (_, i) => i + 1);
const OPEN_ROWS = [2, 3, 6, 10, 14, 18, 20];
const OPEN_COLUMNS = ["A", "D", "E", "I", "J", "O"];
const DOTTED_ROWS = [7, 11];
const DOTTED_COLUMNS = ["H", "N", "P"];

function cellClass(column: string, row: number) {
  const openRow = OPEN_ROWS.includes(row);
  const openColumn = OPEN_COLUMNS.includes(column);
  return clsx(
    "border-[#ecd5e0] p-0",
    !openRow && "border-b",
    !openColumn && "border-r",
    DOTTED_ROWS.includes(row) && "[border-bottom-style:dotted]",
    DOTTED_COLUMNS.includes(column) && "[border-right-style:dotted]",
    openRow && openColumn &&
      "bg-[linear-gradient(#e6cbd8,#e6cbd8)] bg-[length:2px_1px] bg-right-bottom bg-no-repeat",
  );
}

function Sheet() {
  return (
    <div className="flex">
      <div className="min-w-0 flex-1">
        <table className="h-[210px] w-full table-fixed border-separate border-spacing-0 border-r border-[#b9b9b9] bg-[#f8f8f8] text-[6px] leading-[6px]">
          <thead>
            <tr className="h-[15px] bg-[#eadae0]">
              <th className="w-[13px] border-r border-b border-[#c6c0c3] p-0">
                <svg viewBox="0 0 6 6" className="mt-1 ml-[5px] size-[6px]" aria-hidden="true">
                  <path d="M6 0v6H0z" fill="#b0adae" />
                </svg>
              </th>
              {COLUMNS.map((column, i) => (
                <th
                  key={column}
                  className={clsx("border-b border-[#c6c0c3] p-0 pt-1 font-normal", i < 3 && "w-[80px]")}
                >
                  {column}
                </th>
              ))}
            </tr>
          </thead>
          <tbody>
            {ROWS.map((row) => (
              <tr key={row}>
                <th className="border-r border-b border-[#cfc3c8] bg-[#eadae0] p-0 font-normal">{row}</th>
                {COLUMNS.map((column) => (
                  <td key={column} className={cellClass(column, row)} />
                ))}
              </tr>
            ))}
          </tbody>
        </table>
      </div>
      <div className="flex w-[10px] flex-col items-center bg-[#e4dcdd] pt-1">
        <button aria-label="Scroll up" className="flex h-[7px] w-[7px] items-center justify-center bg-[#f8f8f8]">
          <svg viewBox="0 0 4 4" className="size-[4px]"><path d="M0 3 2 1l2 2z" fill="#777" /></svg>
        </button>
        <div className="mt-px h-[180px] w-[7px] border border-[#d0cccc] bg-[#f8f8f8]" />
        <button aria-label="Scroll down" className="mt-auto flex h-[7px] w-[7px] items-center justify-center bg-[#f8f8f8]">
          <svg viewBox="0 0 4 4" className="size-[4px]"><path d="m0 1 2 2 2-2z" fill="#555" /></svg>
        </button>
      </div>
    </div>
  );
}

function SpreadsheetWindow() {
  return (
    <section className="absolute top-[81px] right-[51px] left-[148px] border border-t-0 border-[#b9b0b4] bg-[#eadae0] font-['Open_Sans',sans-serif] text-[6px] text-[#555]">
      <header className="grid h-[17px] grid-cols-[1fr_auto_1fr] items-center bg-[#217346] leading-[8px] text-[#c5dccf]">
        <div className="flex items-center pl-[10px]">
          <label htmlFor="autosave">AutoSave</label>
          <span className="ml-[3px] grid h-2 w-[19px] items-center rounded-full border border-[#e5f0ea] text-[5px] leading-[6px] text-white">
            <input
              id="autosave"
              type="checkbox"
              className="col-start-1 row-start-1 ml-px size-[5px] appearance-none rounded-full bg-white"
            />
            <span className="pointer-events-none col-start-1 row-start-1 mr-[2px] justify-self-end font-semibold">Off</span>
          </span>
          <Art className="ml-[7px] size-2">
            <path d="M1 1h12l2 2v12H1zM4 1v5h8V1M4 15v-6h8v6" stroke="#b9d6c6" strokeWidth="1.5" />
          </Art>
          <Art className="ml-[6px] size-2">
            <path d="M2 2v6h6M2 8Q8 0 13 5t-5 10" stroke="#b9d6c6" strokeWidth="2" />
          </Art>
          <Caret className="ml-px text-[#b9d6c6]" />
          <Art className="ml-[5px] size-2">
            <path d="M14 2v6H8M14 8Q8 0 3 5t5 10" stroke="#4f9470" strokeWidth="2" />
          </Art>
          <Caret className="ml-[2px] text-[#4f9470]" />
          <Art className="ml-[5px] size-[6px]">
            <path d="M2 3h12M4 8h8l-4 4z" stroke="#b9d6c6" strokeWidth="2" />
          </Art>
        </div>
        <span>GoExcel.xlsx&nbsp; -&nbsp; Saved</span>
        <div className="flex items-center justify-end pr-[6px]">
          <span>Thakar, Dutt</span>
          <Art className="ml-[5px] size-3">
            <circle cx="8" cy="8" r="8" fill="#e9e9e9" stroke="none" />
            <circle cx="8" cy="6" r="2.500" stroke="#777" />
            <path d="M3.500 13q0-4 4.500-4t4.500 4" stroke="#777" />
          </Art>
          <button aria-label="Ribbon options" className="ml-[12px]">
            <Art className="size-2">
              <path d="M1 2h14v12H1zM1 5h14M8 12V7M6 9l2-2 2 2" stroke="#c5dccf" strokeWidth="1.500" />
            </Art>
          </button>
          <button aria-label="Minimise" className="ml-[15px]"><Minus className="size-2" /></button>
          <button aria-label="Maximise" className="ml-[15px]"><Square className="size-[7px]" /></button>
          <button aria-label="Close" className="ml-[14px]"><X className="size-2" /></button>
        </div>
      </header>

      <nav className="flex h-[15px] items-center bg-[#f8f8f8] leading-[10px]">
        {XL_TABS.map((tab) => (
          <button key={tab.label} className={clsx("shrink-0 text-center whitespace-nowrap", tab.width)}>
            <span
              className={clsx(
                "inline-block border-b",
                tab.label === "Home" ? "border-[#217346] font-semibold text-[#217346]" : "border-transparent",
              )}
            >
              {tab.label}
            </span>
          </button>
        ))}
        <label htmlFor="search" className="ml-[12px]"><Search className="size-2 -scale-x-100" /></label>
        <input id="search" placeholder="Search" className="ml-[6px] w-[40px] min-w-0 bg-transparent placeholder:text-[#666]" />
        <button className="ml-auto flex items-center gap-[2px] border border-[#ecd5e0] px-[3px] leading-[9px] text-[#3a7d58]">
          <Art className={S}>
            <path d="M6 6H2v8h10v-4M5 11q0-6 6-6V2l4 4-4 4V7" stroke="#3a7d58" strokeWidth="1.5" />
          </Art>
          Share
        </button>
        <button className="mr-[4px] ml-[4px] flex items-center gap-[2px] border border-[#ecd5e0] px-[3px] leading-[9px] text-[#3a7d58]">
          <Art className={S}>
            <path d="M2 2h12v8H8l-3 4v-4H2z" stroke="#3a7d58" strokeWidth="1.500" />
          </Art>
          Comments
        </button>
      </nav>

      <XlRibbon />

      <div className="flex items-start gap-4 border-t border-[#d3d0ce] pt-[5px] pl-[2px]">
        <span className="grid w-[49px] items-center bg-[#f8f8f8]">
          <input aria-label="Name box" defaultValue="H9" className="col-start-1 row-start-1 h-3 w-full pl-[3px]" />
          <svg viewBox="0 0 4 4" className="col-start-1 row-start-1 mr-[3px] size-[4px] justify-self-end" aria-hidden="true">
            <path d="m0 1 2 2 2-2z" fill="#666" />
          </svg>
        </span>
        <div className="flex h-3 w-[52px] items-center justify-around bg-[#f8f8f8]">
          <button aria-label="Cancel"><X className="size-[7px] text-[#aaa]" /></button>
          <button aria-label="Enter">
            <Art className="size-[7px]"><path d="m2 9 4 4 8-10" stroke="#aaa" strokeWidth="2" /></Art>
          </button>
          <button className="font-['Liberation_Serif',serif] text-[7px] font-bold italic">fx</button>
        </div>
        <div className="-ml-[13px] flex min-w-0 flex-1 pr-[2px]">
          <textarea aria-label="Formula bar" className="h-[51px] min-w-0 flex-1 resize-none bg-[#f8f8f8]" />
          <button aria-label="Collapse formula bar" className="flex h-[51px] items-start bg-[#f8f8f8] pt-[3px] pr-px">
            <svg viewBox="0 0 4 4" className="size-[4px]"><path d="M0 3 2 1l2 2z" fill="#666" /></svg>
          </button>
        </div>
      </div>

      <Sheet />

      <div className="flex h-[14px] items-start border-t border-[#c9c5c6]">
        <button className="ml-[48px] h-3 w-8 border-b border-[#217346] bg-[#f8f8f8] font-bold text-[#217346]">Sheet2</button>
        <button aria-label="New sheet" className="ml-4 pt-[2px]">
          <Art className={S}>
            <circle cx="8" cy="8" r="7" />
            <path d="M8 4v8M4 8h8" strokeWidth="1.500" />
          </Art>
        </button>
        <div className="mt-[3px] mr-[9px] ml-auto flex w-[262px] items-center justify-between bg-[#e2dfda]">
          <button aria-label="Scroll left" className="flex size-[7px] items-center justify-center bg-[#f8f8f8]">
            <svg viewBox="0 0 4 4" className="size-[4px]"><path d="M3 0 1 2l2 2z" fill="#555" /></svg>
          </button>
          <div className="mr-auto ml-px h-[7px] w-[230px] bg-[#f8f8f8]" />
          <button aria-label="Scroll right" className="flex size-[7px] items-center justify-center bg-[#f8f8f8]">
            <svg viewBox="0 0 4 4" className="size-[4px]"><path d="m1 0 2 2-2 2z" fill="#555" /></svg>
          </button>
        </div>
      </div>

      <footer className="flex h-[10px] items-center bg-[#f8f8f8] pl-[4px]">
        <Art className="size-[7px]">
          <path d="M1 2h13v12H1zM1 6h13M5 2v12" strokeWidth="2" />
          <circle cx="11" cy="11" r="4" fill="#777" />
        </Art>
        <button aria-label="Normal view" className="ml-auto flex h-full w-5 items-center justify-center bg-[#c4c4c4]">
          <Art className="size-[7px]"><path d="M1 1h14v14H1zM6 1v14M11 1v14M1 6h14M1 11h14" stroke="#555" strokeWidth="2" /></Art>
        </button>
        <button aria-label="Page layout view" className="flex w-[19px] justify-center">
          <Art className="size-[7px]"><path d="M1 1h14v14H1zM4 5h8v9H4zM6 8h4M6 11h4" stroke="#888" strokeWidth="1.500" /></Art>
        </button>
        <button aria-label="Page break view" className="flex w-[20px] justify-center">
          <Art className="size-[7px]"><path d="M1 1h14v14H1zM5 15V6h5v9M10 1v5" stroke="#888" strokeWidth="1.5" /></Art>
        </button>
        <Minus className="ml-1 size-[6px]" aria-hidden="true" />
        <input
          type="range"
          aria-label="Zoom"
          defaultValue={50}
          className="mx-[2px] h-[6px] w-[48px] appearance-none bg-[linear-gradient(#bbb,#bbb)] bg-[length:100%_1px] bg-center bg-no-repeat [&::-webkit-slider-thumb]:h-[6px] [&::-webkit-slider-thumb]:w-[3px] [&::-webkit-slider-thumb]:appearance-none [&::-webkit-slider-thumb]:bg-[#666]"
        />
        <Plus className="size-[6px]" aria-hidden="true" />
        <span className="w-[24px] pl-[6px] text-[5px]">100%</span>
      </footer>
    </section>
  );
}

/* ---------- Taskbar ---------- */

function LetterTile({ letter, tile }: { letter: string; tile: string }) {
  return (
    <span className={clsx("flex size-3 items-center justify-center text-[10px] leading-none font-bold", tile)}>
      {letter}
    </span>
  );
}

/* Office-style icon: coloured sheet with a darker letter badge */
function OfficeTile({ letter, sheet, badge }: { letter: string; sheet: string; badge: string }) {
  return (
    <span className={clsx("flex h-[10px] w-3 items-center", sheet)}>
      <span className={clsx("flex size-[7px] items-center justify-center text-[6px] leading-none font-bold text-white", badge)}>
        {letter}
      </span>
    </span>
  );
}

const TASKS: { name: string; icon: ReactNode }[] = [
  { name: "Search", icon: <Search className="size-[9px] -scale-x-100 text-white" /> },
  {
    name: "Task view",
    icon: (
      <Art className="size-[9px]">
        <path d="M1 5h8v6H1zM1 1v2h8V1M1 15v-2h8v2M13 1v14M12 5h3" stroke="#ddd" strokeWidth="1.500" />
      </Art>
    ),
  },
  {
    name: "File Explorer",
    icon: (
      <Art className="size-3">
        <path d="M1 2h5l2 2h7v10H1z" fill="#f7cf62" stroke="none" />
        <path d="M1 7h14v7H1z" fill="#ffe18a" stroke="none" />
        <path d="M4 10h8v4H4z" fill="#3f97d8" stroke="none" />
      </Art>
    ),
  },
  {
    name: "Migration tool",
    icon: (
      <Art className="size-3">
        <path d="M1 2h8v11H1z" fill="#f6b21c" stroke="none" />
        <path d="M8 3h7v5l-2 4-6 2-1-3 3-3z" fill="#f29a12" stroke="none" />
        <path d="M10 1h4v5h-3l-2 3-2-1zM3 11h5l2 4H5z" fill="#2a5e9a" stroke="none" />
      </Art>
    ),
  },
  { name: "Excel", icon: <OfficeTile letter="X" sheet="bg-[#31a56b]" badge="bg-[#14673a]" /> },
  {
    name: "Internet Explorer",
    icon: (
      <Art className="size-3">
        <path d="M3 8.500h10q0-5-5-5t-5 5 5 5q3 0 4.500-2.500" stroke="#5cc3f3" strokeWidth="2.500" />
        <path d="M1 14Q1 8 9 3t6-1" stroke="#f5c542" strokeWidth="1.500" />
      </Art>
    ),
  },
  { name: "Outlook", icon: <OfficeTile letter="O" sheet="bg-[#2a9be8]" badge="bg-[#0f62b0]" /> },
  {
    name: "Calculator",
    icon: (
      <Art className="size-3">
        <rect x="3" y="1" width="11" height="14" fill="#9db4c4" stroke="none" />
        <path d="M4 2h9v4H4z" fill="#4fb2e5" stroke="none" />
        <path d="M5 8h2M8 8h2M11 8h2M5 11h2M8 11h2M11 11h2M5 14h2M8 14h2M11 14h2" stroke="#3f5562" strokeWidth="1.500" />
      </Art>
    ),
  },
  {
    name: "Snipping Tool",
    icon: (
      <Art className="size-3">
        <ellipse cx="8" cy="6" rx="7" ry="5" fill="#eef0f2" stroke="#c8c8c8" />
        <path d="m4 14 8-9M4 7l8 2" stroke="#d98a8a" strokeWidth="1.500" />
        <circle cx="4" cy="13" r="2" stroke="#d03a3a" strokeWidth="1.500" />
      </Art>
    ),
  },
  {
    name: "Chrome",
    icon: (
      <Art className="size-3">
        <circle cx="8" cy="8" r="7" fill="#34a853" stroke="none" />
        <path d="M8 8 2 4.500A7 7 0 0 1 14.500 5z" fill="#ea4335" stroke="none" />
        <path d="M8 8l6.500-3A7 7 0 0 1 8 15z" fill="#fbbc05" stroke="none" />
        <circle cx="8" cy="8" r="3" fill="#4285f4" stroke="#fff" />
      </Art>
    ),
  },
  { name: "AutoCAD", icon: <LetterTile letter="A" tile="bg-[#f0eeee] text-[#b02a30] font-['Liberation_Sans',sans-serif]" /> },
  {
    name: "Skype",
    icon: (
      <span className="relative flex size-3 items-center justify-center rounded-full bg-[#3bb3ee] text-[9px] leading-none font-bold text-white">
        S
        <span className="absolute right-0 -bottom-px size-[5px] rounded-full bg-[#8cc63f]" />
      </span>
    ),
  },
  { name: "Inventor", icon: <LetterTile letter="I" tile="bg-[#efe6dc] text-[#c07a35] font-['Liberation_Serif',serif]" /> },
  { name: "OneNote", icon: <OfficeTile letter="N" sheet="bg-[#c060d8]" badge="bg-[#80279c]" /> },
  {
    name: "Edge",
    icon: (
      <Art className="size-3">
        <circle cx="8" cy="8" r="7" fill="#1a7fd0" stroke="none" />
        <path d="M2 6a7 7 0 0 1 13 1q0 4-5 4 0-4-3-5t-5 0z" fill="#3fce8c" stroke="none" />
        <path d="M5 9q2-4 5 0 0 2 3 2" stroke="#0b4f94" strokeWidth="1.500" />
      </Art>
    ),
  },
  {
    name: "Teams",
    icon: (
      <span className="relative">
        <OfficeTile letter="T" sheet="bg-[#6b74d8] rounded-sm" badge="bg-[#3f479e]" />
        <span className="absolute right-0 -bottom-px size-[4px] rounded-full bg-[#9ccf5a]" />
      </span>
    ),
  },
  { name: "Vault", icon: <LetterTile letter="V" tile="bg-[#f3ead9] text-[#d08a20] font-['Liberation_Sans',sans-serif]" /> },
  { name: "Word", icon: <OfficeTile letter="W" sheet="bg-[#3f94e0]" badge="bg-[#184f9c]" /> },
  { name: "Inventor 2", icon: <LetterTile letter="I" tile="bg-[#f7ecd8] text-[#c98a30] font-['Liberation_Serif',serif]" /> },
  {
    name: "Screen recorder",
    icon: (
      <Art className="size-3">
        <circle cx="8" cy="8" r="6.500" fill="#ef3560" stroke="none" />
        <rect x="4" y="5.500" width="8" height="5.500" rx="1" fill="#fff" stroke="none" />
        <circle cx="8" cy="8" r="1.500" fill="#ef3560" stroke="none" />
      </Art>
    ),
  },
];

function Taskbar() {
  return (
    <footer className="relative z-10 flex h-[18px] shrink-0 items-center bg-[linear-gradient(to_right,#2e2e2e_0%,#2d2e2f_52%,#152531_68%)] text-white">
      <button aria-label="Start" className="flex w-[22px] justify-center">
        <Art className="size-[9px]">
          <path d="m1 3 6-1v5.500H1zM8 2l7-1v6.500H8zM1 8.500h6V14l-6-1zM8 8.500h7V15l-7-1z" fill="#fff" stroke="none" />
        </Art>
      </button>
      {TASKS.map((task) => (
        <button
          key={task.name}
          aria-label={task.name}
          className={clsx(
            "flex h-full w-6 items-center justify-center",
            task.name === "Screen recorder" && "bg-[#55565d]",
          )}
        >
          {task.icon}
        </button>
      ))}
      <div className="ml-auto flex items-center gap-[3px]">
        <Art className="mr-[6px] size-[9px]">
          <circle cx="10" cy="4" r="3" stroke="#ddd" strokeWidth="1.500" />
          <circle cx="4" cy="8" r="2" stroke="#ddd" strokeWidth="1.500" />
          <path d="M6 13q0-5 4-5t5 4M1 15q0-4 3-4t3 4" stroke="#ddd" strokeWidth="1.500" />
        </Art>
        <ChevronUp className="size-[9px]" />
        <Art className="size-[9px]">
          <rect x="3" y="5" width="12" height="8" fill="#fff" stroke="none" />
          <path d="M1 3h5v4H1z" fill="#ddd" stroke="#333" />
        </Art>
        <Art className="size-[9px]">
          <path d="M1 11q0-4 4-4 2-5 6-1 4 1 4 5z" fill="#2f8de0" stroke="none" />
          <circle cx="12" cy="11" r="4" fill="#e23b2e" stroke="none" />
          <path d="m10 9 4 4M14 9l-4 4" stroke="#fff" />
        </Art>
        <Art className="size-[9px]">
          <path d="M1 6h3l4-4v12l-4-4H1zM10 5q2 3 0 6M12 3q4 5 0 10" stroke="#ddd" strokeWidth="1.500" />
        </Art>
        <span>ENG</span>
        <time className="ml-px w-[24px] overflow-hidden text-center leading-[8px] whitespace-nowrap">
          <span className="block">17:21</span>
          <span className="block">05/01/20</span>
        </time>
      </div>
    </footer>
  );
}

export default function App() {
  return (
    <div className="relative flex min-h-screen flex-col bg-[#f8f8f8] font-[Roboto,sans-serif] text-[6px] leading-[8px] text-[#555]">
      <nav className="flex h-2 shrink-0 items-center bg-[#dcdbd5] leading-[6px]">
        <button className="h-full w-[22px] bg-[#f59b1c] pb-[2px] text-white">File</button>
        <div className="flex h-full pb-[2px]">
          <span className="flex h-2 w-[45px] items-start bg-[#f8f8f8] pl-[5px] whitespace-nowrap">
            <button>Sheet Metal</button>
            <OrangeDot />
          </span>
          {CAD_TABS.map((tab) => (
            <span key={tab.label} className={clsx("flex shrink-0 items-start gap-px whitespace-nowrap", tab.width)}>
              <button>{tab.label}</button>
              {tab.dot && <OrangeDot />}
            </span>
          ))}
          <Art className="size-[6px]">
            <rect x="1" y="2" width="14" height="12" strokeWidth="2" />
            <circle cx="8" cy="8" r="2" fill="#555" />
          </Art>
          <Caret className="ml-1" />
        </div>
      </nav>
      <CadRibbon />
      <div className="flex flex-1">
        <SidePanels />
        <Viewport />
      </div>
      <div className="flex h-3 shrink-0 items-center bg-[#f3eff2]">For Help, press F1</div>
      <SpreadsheetWindow />
      <Taskbar />
    </div>
  );
}
